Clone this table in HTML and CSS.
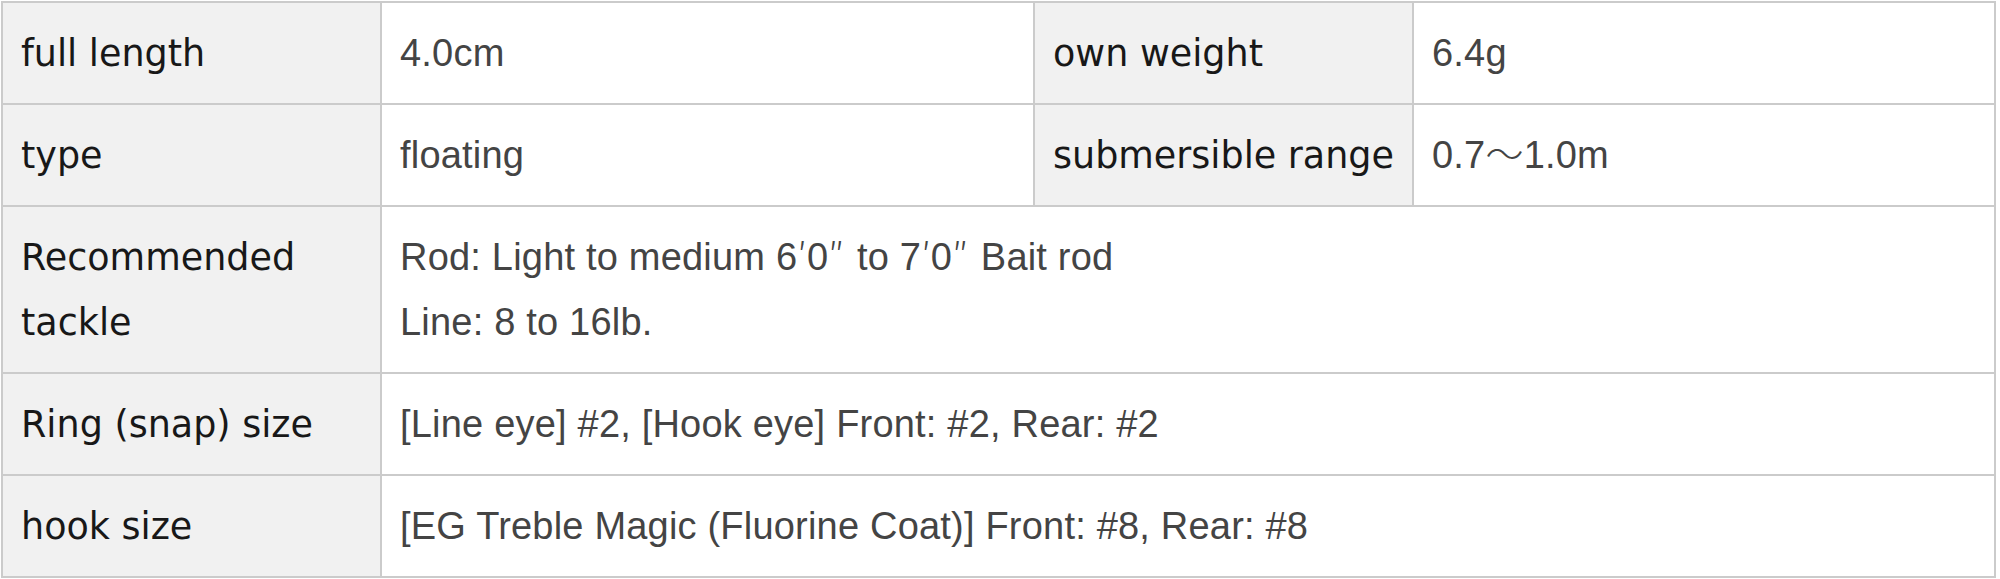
FILE: index.html
```html
<!DOCTYPE html>
<html lang="en">
<head>
<meta charset="utf-8">
<title>Spec</title>
<link rel="stylesheet" href="styles.css">
</head>
<body>
<table class="spec">
  <colgroup>
    <col class="c-label">
    <col class="c-val1">
    <col class="c-label">
    <col class="c-val2">
  </colgroup>
  <tbody>
    <tr>
      <th>full length</th>
      <td>4.0cm</td>
      <th>own weight</th>
      <td>6.4g</td>
    </tr>
    <tr>
      <th>type</th>
      <td>floating</td>
      <th>submersible range</th>
      <td>0.7<span class="jp">～</span>1.0m</td>
    </tr>
    <tr>
      <th>Recommended<br>tackle</th>
      <td colspan="3">Rod: Light to medium 6<span class="jp">′</span>0<span class="jp dq">″</span> to 7<span class="jp">′</span>0<span class="jp dq">″</span> Bait rod<br>Line: 8 to 16lb.</td>
    </tr>
    <tr>
      <th>Ring (snap) size</th>
      <td colspan="3">[Line eye] #2, [Hook eye] Front: #2, Rear: #2</td>
    </tr>
    <tr>
      <th>hook size</th>
      <td colspan="3">[EG Treble Magic (Fluorine Coat)] Front: #8, Rear: #8</td>
    </tr>
  </tbody>
</table>
</body>
</html>
```

FILE: styles.css
```css
html, body {
  margin: 0;
  padding: 0;
  background: #ffffff;
}

body {
  padding: 1px 0 0 1px;
}

.spec {
  border-collapse: collapse;
  table-layout: fixed;
  width: 1994px;
}

.c-label { width: 379px; }
.c-val1 { width: 653px; }
.c-val2 { width: 582px; }

.spec th,
.spec td {
  border: 2px solid #cbcbcb;
  padding: 18px 16px 17px 18px;
  line-height: 65px;
  text-align: left;
  vertical-align: middle;
  white-space: nowrap;
}

.spec th {
  background: #f1f1f1;
  font-family: "DejaVu Sans", "Noto Sans CJK JP", sans-serif;
  font-weight: normal;
  font-size: 36.5px;
  color: #181818;
}

.spec td {
  background: #ffffff;
  font-family: "Liberation Sans", "Noto Sans CJK JP", sans-serif;
  font-size: 38px;
  letter-spacing: 0.2px;
  color: #444444;
}

.jp {
  font-family: "Noto Sans CJK JP", sans-serif;
  font-weight: 300;
  line-height: 1;
}

.dq {
  margin-right: 0.05em;
}
```
